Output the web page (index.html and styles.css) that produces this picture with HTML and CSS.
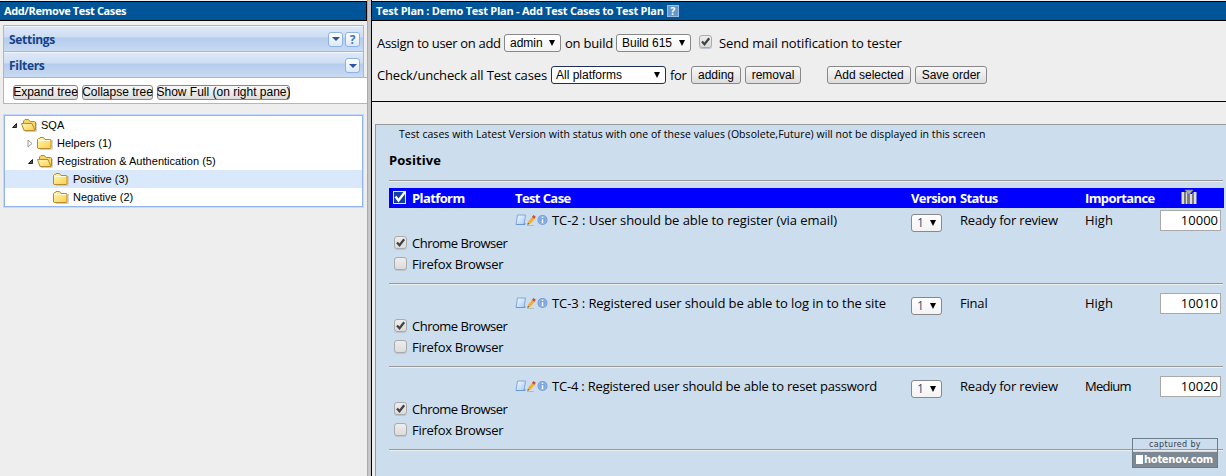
FILE: index.html
```html
<!DOCTYPE html>
<html lang="en">
<head>
<meta charset="utf-8">
<title>Add/Remove Test Cases</title>
<link rel="stylesheet" href="styles.css">
</head>
<body>
<svg width="0" height="0" class="defs" aria-hidden="true">
  <defs>
    <linearGradient id="gold" x1="0" y1="0" x2="1" y2="1"><stop offset="0" stop-color="#fff8b8"/><stop offset="1" stop-color="#f8d04c"/></linearGradient>
    <linearGradient id="sheet" x1="0" y1="0" x2="1" y2="1"><stop offset="0" stop-color="#f4faff"/><stop offset="1" stop-color="#a9cbf0"/></linearGradient>
    <symbol id="folder" viewBox="0 0 16 16">
      <path d="M3 14.300h12.200V5" fill="none" stroke="#c5c3bd"/>
      <path d="M.5 13V4.500L1.500 3.500h1l.5-1h3.500L8 4.500h5l1 .500v8l-.5.500H1z" fill="url(#gold)" stroke="#b98a2d"/>
      <path d="M1.500 5.500h11.500" stroke="#fffbd8"/>
    </symbol>
    <symbol id="folder-open" viewBox="0 0 16 16">
      <path d="M4 14.300h11.300V6" fill="none" stroke="#c5c3bd"/>
      <path d="M2.500 12V4L4 2.500h3.500L9 4.500h4.500l1 .500v8" fill="#f7d569" stroke="#b98a2d"/>
      <path d="M.5 6.500h10.500l3 7H3z" fill="url(#gold)" stroke="#b98a2d"/>
    </symbol>
    <symbol id="tick" viewBox="0 0 13 13"><path d="M3 6.500 5.500 9.200 10.200 3.200" fill="none" stroke="#444" stroke-width="2.300"/></symbol>
    <symbol id="tools" viewBox="0 0 34 13">
      <path d="M2.500 1h8L9 10.500H1z" fill="url(#sheet)" stroke="#7fa8dc"/>
      <path d="M1 10.500h9v-1.500" fill="none" stroke="#6797d4"/>
      <path d="M12 11.500h7" stroke="#b5bdb6"/>
      <path d="m12.500 10.500 1-3.200 4.200-5 2.400 2-4.400 5.200z" fill="#f5ac35"/>
      <path d="m17 3 1.500-2 2.300 1.700-1.400 2z" fill="#c74b3e"/>
      <path d="m12.300 10.700.6-2 1.500 1.200z" fill="#6b5338"/>
      <circle cx="27.500" cy="6" r="5" fill="#6f9bd2"/><circle cx="27.500" cy="6" r="3.800" fill="#7fa6dc" stroke="#a5c3ea" stroke-width=".6"/>
      <path d="M27.500 5.200v4M27.500 2.800v1.300" stroke="#fff" stroke-width="1.500"/>
    </symbol>
  </defs>
</svg>
<div class="app">
  <aside class="nav">
    <h1 class="bar">Add/Remove Test Cases</h1>
    <div class="nav-body">
      <div class="panel-head"><span>Settings</span><i class="tool"><b class="down"></b></i><i class="tool q">?</i></div>
      <div class="panel-head filters"><span>Filters</span><i class="tool"><b class="down"></b></i></div>
      <div class="tree-actions"><button class="w65">Expand tree</button><button class="w71">Collapse tree</button><button class="w133">Show Full (on right pane)</button></div>
      <div class="tree">
        <div class="node l0"><svg class="arrow" viewBox="0 0 7 7"><path d="M1.500 5.500h4v-4z"/></svg><svg class="folder"><use href="#folder-open"/></svg><span>SQA</span></div>
        <div class="node l1"><svg class="arrow closed" viewBox="0 0 7 9"><path d="M1 1v7l4-3.500z"/></svg><svg class="folder"><use href="#folder"/></svg><span>Helpers (1)</span></div>
        <div class="node l1"><svg class="arrow" viewBox="0 0 7 7"><path d="M1.500 5.500h4v-4z"/></svg><svg class="folder"><use href="#folder-open"/></svg><span>Registration &amp; Authentication (5)</span></div>
        <div class="node l2 selected"><svg class="folder"><use href="#folder"/></svg><span>Positive (3)</span></div>
        <div class="node l2"><svg class="folder"><use href="#folder"/></svg><span>Negative (2)</span></div>
      </div>
    </div>
  </aside>
  <div class="splitter"></div>
  <main class="main">
    <h1 class="bar"><span class="title">Test Plan : Demo Test Plan - Add Test Cases to Test Plan</span><i class="help">?</i></h1>
    <section class="controls">
      <div class="line one"><span class="t1">Assign to user on add</span><span class="select s1">admin<b></b></span><span class="t2">on build</span><span class="select s2">Build 615<b></b></span><span class="check up"><svg><use href="#tick"/></svg></span><span class="t3">Send mail notification to tester</span></div>
      <div class="line two"><span class="t4">Check/uncheck all Test cases</span><span class="select s3">All platforms<b></b></span><span class="t5">for</span><button class="b1">adding</button><button class="b2">removal</button><button class="b3">Add selected</button><button class="b4">Save order</button></div>
    </section>
    <section class="work">
      <p class="note">Test cases with Latest Version with status with one of these values (Obsolete,Future) will not be displayed in this screen</p>
      <h2>Positive</h2>
      <div class="rule"></div>
      <div class="grid head">
        <svg class="toggle" viewBox="0 0 13 13"><path d="M0 0h13v13H0z" fill="#dce8f8"/><path d="M1 1h11v11H1z" fill="#10409c"/><path d="m2.500 5.500 3 4L12 1" fill="none" stroke="#fff" stroke-width="2.400"/></svg>
        <span>Platform</span><span>Test Case</span><span>Version</span><span>Status</span><span>Importance</span>
        <svg class="sort" viewBox="0 0 16 16"><path d="M.5 3h3v12h-3zM4.500 3h2v12h-2zM8.500 5h3v10h-3zM12.500 3h3v12h-3z" fill="#ddd"/><path d="M3.500 3v12M7.500 6v9M11.500 4v11" stroke="#777"/><path d="M4 1h8L8 6z" fill="#aaa" stroke="#777" stroke-width=".6"/></svg>
      </div>
      <div class="case">
        <div class="grid"><span class="name"><svg class="tools"><use href="#tools"/></svg><span class="c2">TC-2 : User should be able to register (via email)</span></span><span class="select v">1<b></b></span><span class="st">Ready for review</span><span class="im">High</span><span class="order">10000</span></div>
        <div class="platform"><span class="check"><svg><use href="#tick"/></svg></span><span class="cb">Chrome Browser</span></div>
        <div class="platform"><span class="check"></span><span class="fb">Firefox Browser</span></div>
        <div class="rule"></div>
      </div>
      <div class="case">
        <div class="grid"><span class="name"><svg class="tools"><use href="#tools"/></svg><span class="c3">TC-3 : Registered user should be able to log in to the site</span></span><span class="select v">1<b></b></span><span class="st">Final</span><span class="im">High</span><span class="order">10010</span></div>
        <div class="platform"><span class="check"><svg><use href="#tick"/></svg></span><span class="cb">Chrome Browser</span></div>
        <div class="platform"><span class="check"></span><span class="fb">Firefox Browser</span></div>
        <div class="rule"></div>
      </div>
      <div class="case">
        <div class="grid"><span class="name"><svg class="tools"><use href="#tools"/></svg><span class="c4">TC-4 : Registered user should be able to reset password</span></span><span class="select v">1<b></b></span><span class="st">Ready for review</span><span class="im med">Medium</span><span class="order">10020</span></div>
        <div class="platform"><span class="check"><svg><use href="#tick"/></svg></span><span class="cb">Chrome Browser</span></div>
        <div class="platform"><span class="check"></span><span class="fb">Firefox Browser</span></div>
        <div class="rule"></div>
      </div>
    </section>
  </main>
</div>
<div class="badge"><div class="cap">captured by</div><div class="site"><i></i><span>hotenov.com</span></div></div>
</body>
</html>
```
FILE: styles.css
```css
* { box-sizing: border-box; }
body { margin: 0; background: #eee; color: #000; font: 13px/20px "Trebuchet MS", "Open Sans", sans-serif; white-space: nowrap; overflow: hidden; }
.defs { position: absolute; }
.app { display: flex; height: 476px; }
.nav { width: 367px; flex: none; }
.splitter { width: 5px; flex: none; background: #c6c6c6; border-left: 1px solid #aaa; border-right: 1px solid #000; }
.main { flex: 1; min-width: 0; display: flex; flex-direction: column; }
.bar { margin: 1px 0 0; height: 20px; border: solid #000; border-width: 1px 0; background: #005498; color: #fff; font-size: 11px; line-height: 18px; font-weight: 700; padding-left: 4px; display: flex; align-items: center; letter-spacing: -.26px; }
.nav .bar { border-right: 1px solid #000; letter-spacing: -.38px; }
.help { width: 12px; height: 12px; margin-left: 3px; background: #6597cd; border: 1px solid #9bbce0; font: 700 10px/10px "Open Sans", sans-serif; text-align: center; }

.nav-body { padding: 4px 0 0 3px; }
.panel-head { width: 361px; height: 27px; border: 1px solid #99bbe8; background: linear-gradient(#dfe9f7 0, #cddef3 11px, #b5ccec 12px, #c9daf2 100%); box-shadow: inset 0 1px #f0f6fd; color: #15428b; font-weight: 700; font-size: 12px; line-height: 25px; padding: 1px 3px 0 5px; display: flex; gap: 2px; align-items: center; letter-spacing: -.3px; }
.panel-head span { flex: 1; }
.filters { height: 25px; border-top: 0; border-bottom: 0; padding-top: 2px; }
.tool { width: 15px; height: 15px; border: 1px solid #8eb2e3; border-radius: 3px; background: linear-gradient(#fff, #dce8f7); display: flex; align-items: center; justify-content: center; }
.q { font: 700 12px/13px "Open Sans", sans-serif; color: #4878b0; }
.down { border: 4px solid transparent; border-top-color: #2a52a5; border-bottom: 0; }
.tree-actions { width: 364px; height: 27px; background: #fff; border: 1px solid #99bbe8; border-right: 0; padding: 7px 0 0 9px; display: flex; gap: 4px; }
button { margin: 0; padding: 0; border: 1px solid #888; border-radius: 3px; background: linear-gradient(#f8f8f8, #ddd); color: #000; font: 12px/14px "Liberation Sans", Arial, sans-serif; white-space: nowrap; }
.tree-actions button { height: 15px; line-height: 13px; display: flex; justify-content: center; }
.w65 { width: 65px; } .w71 { width: 71px; } .w133 { width: 133px; }
.tree { width: 361px; height: 94px; margin-top: 10px; border: 1px solid #c5dafa; background: #fff; box-shadow: inset 0 0 0 1px #94b6e6; padding: 1px; font: 11px/18px "Liberation Sans", Arial, sans-serif; letter-spacing: .03px; }
.node { height: 18px; display: flex; align-items: center; }
.l0 { padding-left: 6px; } .l1 { padding-left: 22px; } .l2 { padding-left: 48px; }
.arrow { width: 7px; height: 7px; margin-right: 3px; fill: #555; stroke: #222; }
.closed { height: 9px; fill: #fff; stroke: #999; }
.folder { width: 16px; height: 16px; margin-right: 4px; }
.selected { background: #d9e8fb; }

.controls { height: 81px; flex: none; border-bottom: 1px solid #000; padding: 12px 0 0 5px; }
.line { display: flex; align-items: center; height: 20px; }
.line + .line { margin-top: 12px; }
.line > * { flex: none; }
.select { display: flex; justify-content: space-between; align-items: center; height: 18px; border: 1px solid #888; border-radius: 3px; background: linear-gradient(#fff, #f3f3f3); font: 12px/16px "Liberation Sans", Arial, sans-serif; padding: 0 5px; }
.select b { border: solid transparent; border-width: 6px 3px 0; border-top-color: #000; }
.t1 { width: 127px; letter-spacing: -.33px; } .s1 { width: 57px; }
.t2 { width: 55px; padding-left: 4px; letter-spacing: -.2px; } .s2 { width: 75px; }
.t3 { letter-spacing: -.1px; }
.check { width: 13px; height: 13px; border: 1px solid #aaa; border-radius: 3px; background: linear-gradient(#ededed, #dcdcdc); box-shadow: 0 1px #bbc5cf; flex: none; }
.check svg { display: block; width: 13px; height: 13px; margin: -1px; }
.up { margin: -4px 7px 0 8px; }
.t4 { width: 174px; letter-spacing: -.15px; } .s3 { width: 115px; padding-left: 4px; border-color: #203050; background: #fff; }
.t5 { width: 25px; padding-left: 4px; letter-spacing: -.3px; }
.line button { height: 18px; }
.b1 { width: 50px; } .b2 { width: 56px; margin-left: 4px; } .b3 { width: 84px; margin-left: 26px; } .b4 { width: 72px; margin-left: 4px; }

.work { flex: 1; margin: 22px 0 0 3px; border: solid #999; border-width: 1px 0 0 1px; background: #ccdded; padding: 0 2px 0 13px; }
.note { margin: 0 0 0 10px; font-size: 10.5px; line-height: 19px; letter-spacing: .045px; }
h2 { margin: 6px 0 0; font-size: 13px; line-height: 20px; height: 30px; letter-spacing: .08px; }
.rule { height: 2px; margin-right: 1px; border-top: 1px solid #999; border-bottom: 1px solid #eee; }
.grid { display: grid; grid-template-columns: 23px 103px 396px 49px 125px 75px 61px; align-items: start; }
.head { margin-top: 6px; height: 20px; background: #00f; color: #fff; font-weight: 700; line-height: 20px; letter-spacing: -.6px; }
.toggle { width: 13px; height: 13px; margin: 3px 0 0 4px; }
.sort { width: 16px; height: 16px; margin: 1px 0 0 21px; }
.case { height: 83px; padding-top: 2px; display: flex; flex-direction: column; }
.head + .case { height: 77px; padding-top: 2px; }
.case .grid { height: 23px; line-height: 20px; }
.case + .case { padding-top: 8px; }
.name { grid-column: 3; display: flex; }
.tools { width: 34px; height: 13px; margin: 4px 3px 0 0; }
.c2 { letter-spacing: -.06px; } .c3 { letter-spacing: -.1px; } .c4 { letter-spacing: -.2px; }
.st { letter-spacing: -.2px; } .med { letter-spacing: -.75px; }
.v { width: 31px; margin-top: 4px; font-family: "Open Sans", sans-serif; color: #17577f; }
.order { height: 21px; border: 1px solid #a9a9a9; background: #fff; text-align: right; padding-right: 2px; line-height: 19px; }
.platform { height: 21px; display: flex; align-items: center; padding-left: 5px; gap: 5px; margin-top: -1px; margin-bottom: 1px; }
.cb { letter-spacing: -.5px; } .fb { letter-spacing: -.27px; }
.case .rule { margin-top: 8px; flex: none; }

.badge { position: absolute; left: 1132px; top: 438px; width: 86px; height: 30px; border: 1px solid #6d7c89; text-align: center; }
.cap { height: 13px; font: 8px/12px "DejaVu Sans", sans-serif; letter-spacing: .35px; color: #34404d; }
.site { height: 15px; background: #7c8994; color: #fff; display: flex; gap: 1px; padding-left: 3px; align-items: center; font: 700 10px/14px "DejaVu Sans", sans-serif; letter-spacing: -.3px; }
.site i { width: 7px; height: 9px; background: #fff; }
```
